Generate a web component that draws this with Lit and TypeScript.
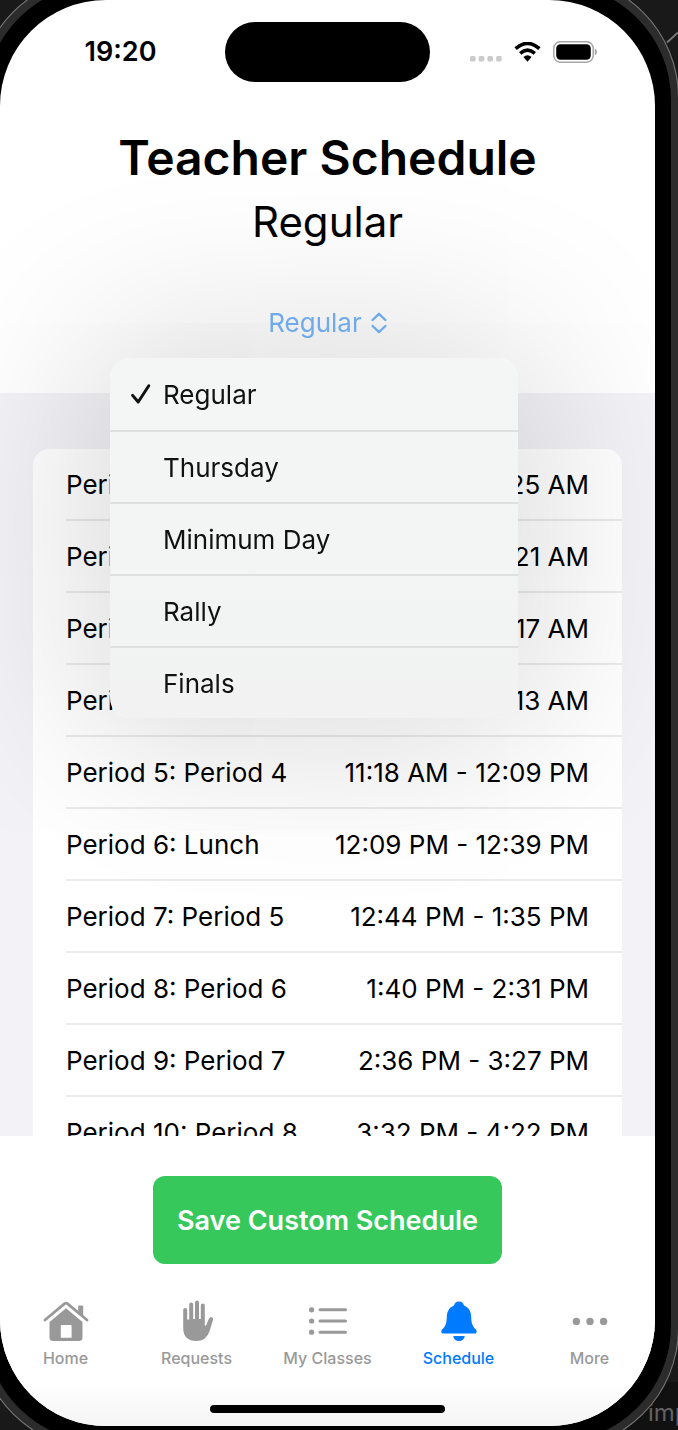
import { LitElement, html, svg, css } from "lit";
import { customElement, state } from "lit/decorators.js";

interface Period {
  name: string;
  time: string;
}

const PERIODS: Period[] = [
  { name: "Period 1: Period 0", time: "7:34 AM - 8:25 AM" },
  { name: "Period 2: Period 1", time: "8:30 AM - 9:21 AM" },
  { name: "Period 3: Period 2", time: "9:26 AM - 10:17 AM" },
  { name: "Period 4: Period 3", time: "10:22 AM - 11:13 AM" },
  { name: "Period 5: Period 4", time: "11:18 AM - 12:09 PM" },
  { name: "Period 6: Lunch", time: "12:09 PM - 12:39 PM" },
  { name: "Period 7: Period 5", time: "12:44 PM - 1:35 PM" },
  { name: "Period 8: Period 6", time: "1:40 PM - 2:31 PM" },
  { name: "Period 9: Period 7", time: "2:36 PM - 3:27 PM" },
  { name: "Period 10: Period 8", time: "3:32 PM - 4:22 PM" },
];

const OPTIONS = ["Regular", "Thursday", "Minimum Day", "Rally", "Finals"];

const TABS = [
  {
    label: "Home",
    icon: svg`
      <path d="M3 20 L22.6 3.6 Q24 2.6 25.4 3.6 L45 20" fill="none" stroke="currentColor" stroke-width="2.8" stroke-linecap="round" stroke-linejoin="round"/>
      <path d="M36.2 6.6 q0-1 1-1 h3 q1 0 1 1 v10 l-5-4.2z"/>
      <path fill-rule="evenodd" d="M24 8.2 L40.5 22 V37.5 Q40.5 41 37 41 H11 Q7.5 41 7.5 37.5 V22 Z M19.8 25 Q18.8 25 18.8 26 V37.8 H29.6 V26 Q29.6 25 28.6 25 Z"/>`,
  },
  {
    label: "Requests",
    icon: svg`
      <path d="M10.2 10 a2 2 0 0 1 4 0 V19.5 h2 V4.5 a2 2 0 0 1 4 0 V19 h1.8 V2.6 a2 2 0 0 1 4 0 V19 h1.8 V5.4 a2 2 0 0 1 4 0 V25.6 q1 .6 1.6-.8 L36 18.6 q1-2 2.8-1.4 q1.8.7 1.2 2.8 L36.6 31 Q33.4 41 23.4 41 Q10.2 41 10.2 27.8 Z"/>`,
  },
  {
    label: "My Classes",
    icon: svg`
      <circle cx="7.6" cy="9.8" r="2.6"/><circle cx="7.6" cy="21" r="2.6"/><circle cx="7.6" cy="32.2" r="2.6"/>
      <path d="M16 9.8 H41.5 M16 21 H41.5 M16 32.2 H41.5" stroke="currentColor" stroke-width="3" stroke-linecap="round"/>`,
  },
  {
    label: "Schedule",
    icon: svg`
      <path d="M24 1.6 C26.6 1.6 28.4 3.2 29 5.6 C34.4 7.8 36 12 36.2 17 C36.4 23.6 37.4 26 40.4 29 C42.4 31 42 33.6 39.4 33.6 H8.6 C6 33.6 5.6 31 7.6 29 C10.6 26 11.6 23.6 11.8 17 C12 12 13.6 7.8 19 5.6 C19.6 3.2 21.4 1.6 24 1.6 Z"/>
      <path d="M18.2 36 H29.8 C29.4 39 27.2 41 24 41 C20.8 41 18.6 39 18.2 36 Z"/>`,
  },
  {
    label: "More",
    icon: svg`
      <circle cx="10.4" cy="21.4" r="3.7"/><circle cx="24" cy="21.4" r="3.7"/><circle cx="37.6" cy="21.4" r="3.7"/>`,
  },
];

@customElement("app-root")
export class AppRoot extends LitElement {
  @state() private selected = "Regular";
  @state() private open = true;
  @state() private tab = "Schedule";

  static styles = css`
    :host {
      display: block;
      font-family: Inter, "Liberation Sans", sans-serif;
      color: #000;
    }
    * {
      box-sizing: border-box;
    }
    button {
      font: inherit;
      color: inherit;
      background: none;
      border: 0;
      margin: 0;
      padding: 0;
      cursor: pointer;
    }
    .desktop {
      position: relative;
      display: flex;
      height: 100vh;
      overflow: hidden;
      background: #191919;
    }
    .edge {
      position: absolute;
      top: 30px;
      right: 0;
      width: 12px;
      height: 14px;
    }
    .backdrop {
      position: absolute;
      right: 0;
      bottom: 0;
      width: 60px;
      height: 48px;
      background: #111;
    }
    .caption {
      position: absolute;
      left: calc(100% - 30px);
      bottom: 3px;
      font-size: 24px;
      line-height: 28px;
      color: #626262;
    }
    .frame {
      position: relative;
      flex: 1;
      display: flex;
      margin: -24px -1px -20px -23px;
      padding: 8px;
      border-radius: 122px;
      background: #2c2c2c;
      box-shadow: inset 0 0 0 1px #777;
    }
    .bezel {
      flex: 1;
      display: flex;
      padding: 16px 16px 16px 15px;
      border-radius: 116px;
      background: #000;
    }
    .screen {
      flex: 1;
      display: flex;
      flex-direction: column;
      overflow: hidden;
      border-radius: 106px;
      background: #fff;
    }
    .status {
      display: grid;
      grid-template-columns: 1fr 205px 1fr;
      align-items: center;
      padding-top: 22px;
    }
    .time {
      padding-left: 16px;
      text-align: center;
      font-size: 27px;
      line-height: 32px;
      font-weight: 600;
    }
    .island {
      height: 60px;
      border-radius: 30px;
      background: #000;
    }
    .signals {
      display: flex;
      align-items: center;
      justify-content: center;
      gap: 12px;
      padding-right: 19px;
    }
    .head {
      position: relative;
      z-index: 1;
      display: flex;
      flex-direction: column;
      align-items: center;
      padding: 44px 0 48px;
    }
    h1 {
      margin: 0;
      font-size: 48px;
      line-height: 64px;
      font-weight: 600;
    }
    h2 {
      margin: 0;
      font-size: 42px;
      line-height: 64px;
      font-weight: 400;
    }
    .picker {
      position: relative;
      z-index: 2;
      display: flex;
      align-items: center;
      gap: 9px;
      margin-top: 47px;
      font-size: 26px;
      line-height: 44px;
      color: #6faaea;
    }
    .menu {
      position: absolute;
      top: 276px;
      left: 110px;
      right: 137px;
      margin: 0;
      padding: 0;
      list-style: none;
      border-radius: 20px;
      background: linear-gradient(#f4f6f6, #f2f2f2);
      box-shadow: 0 0 180px 20px rgba(0, 0, 0, 0.16);
    }
    .menu li + li {
      border-top: 2px solid #dedfdf;
    }
    .option {
      display: flex;
      align-items: center;
      width: 100%;
      height: 70px;
      padding-left: 20px;
      gap: 11px;
      font-size: 26px;
      color: #111;
      text-align: left;
    }
    .menu li:first-child .option {
      height: 72px;
    }
    .mark {
      width: 22px;
      height: 22px;
      visibility: hidden;
    }
    .mark.on {
      visibility: visible;
    }
    .list {
      flex: 1;
      min-height: 0;
      overflow-y: auto;
      scrollbar-width: none;
      padding: 56px 33px;
      background: #f2f2f7;
    }
    .card {
      padding-left: 33px;
      border-radius: 16px;
      background: #fff;
    }
    table {
      width: 100%;
      border-collapse: separate;
      border-spacing: 0;
      font-size: 26px;
      line-height: 32px;
    }
    th,
    td {
      height: 72px;
      padding: 2px 0 0;
      border-bottom: 2px solid #ebebec;
      font-weight: 400;
      text-align: left;
      white-space: nowrap;
    }
    td {
      padding-right: 33px;
      text-align: right;
    }
    .foot {
      display: flex;
      flex-direction: column;
      align-items: center;
      padding: 40px 0 13px;
      background: linear-gradient(#fff 85%, #f5f5f5);
    }
    .save {
      height: 88px;
      padding: 0 24px;
      border-radius: 12px;
      background: #36c85a;
      color: #fff;
      font-size: 27px;
      font-weight: 600;
    }
    .tabs {
      display: grid;
      grid-template-columns: repeat(5, 1fr);
      width: 100%;
      margin: 36px 0;
    }
    .tab {
      display: flex;
      flex-direction: column;
      align-items: center;
      gap: 3px;
      font-size: 16px;
      line-height: 22px;
      font-weight: 500;
      color: #999;
    }
    .tab.on {
      color: #007aff;
    }
    .tab svg {
      width: 48px;
      height: 44px;
      fill: currentColor;
    }
    .bar {
      width: 235px;
      height: 8px;
      border-radius: 4px;
      background: #000;
    }
  `;

  private pick(option: string) {
    this.selected = option;
    this.open = false;
  }

  private renderMenu() {
    return html`<ul class="menu" role="menu">
      ${OPTIONS.map(
        (o) => html`<li role="none">
          <button
            class="option"
            role="menuitemradio"
            aria-checked=${o === this.selected ? "true" : "false"}
            @click=${() => this.pick(o)}
          >
            <svg class="mark ${o === this.selected ? "on" : ""}" viewBox="0 0 22 22" aria-hidden="true">
              <path d="M2.6 12.4 L8.2 19 L18.8 2.8" fill="none" stroke="#111" stroke-width="3" stroke-linecap="round" stroke-linejoin="round" />
            </svg>
            <span>${o}</span>
          </button>
        </li>`
      )}
    </ul>`;
  }

  render() {
    return html`
      <div class="desktop">
        <svg class="edge" viewBox="0 0 12 14" aria-hidden="true">
          <path d="M1 12.5 L12 2.5" stroke="#777" stroke-width="2" />
        </svg>
        <div class="backdrop"></div>
        <span class="caption">imp</span>
        <div class="frame">
          <div class="bezel">
            <main class="screen">
              <div class="status">
                <span class="time">19:20</span>
                <div class="island"></div>
                <div class="signals">
                  <svg width="32" height="20" viewBox="0 0 32 20" fill="#cbcbcb" aria-hidden="true">
                    <rect x="0" y="14" width="5.6" height="5.6" rx="1.6" />
                    <rect x="8.7" y="14" width="5.6" height="5.6" rx="1.6" />
                    <rect x="17.4" y="14" width="5.6" height="5.6" rx="1.6" />
                    <rect x="26.1" y="14" width="5.6" height="5.6" rx="1.6" />
                  </svg>
                  <svg width="27" height="20" viewBox="0 0 27 20" aria-hidden="true">
                    <path d="M1.6 6.6 Q13.5 -3.8 25.4 6.6" fill="none" stroke="#000" stroke-width="3.6" />
                    <path d="M6.2 11.4 Q13.5 5 20.8 11.4" fill="none" stroke="#000" stroke-width="3.6" />
                    <path d="M9.4 15 Q13.5 11.6 17.6 15 L13.5 19.8 Z" />
                  </svg>
                  <svg width="44" height="22" viewBox="0 0 44 22" aria-hidden="true">
                    <rect x="0.8" y="0.8" width="39.4" height="20.4" rx="6.4" fill="none" stroke="#a6a6a6" stroke-width="1.5" />
                    <rect x="3.2" y="3.2" width="34.6" height="15.6" rx="4.2" />
                    <path d="M41.8 7.6 Q44 8.6 44 11 Q44 13.4 41.8 14.4 Z" fill="#a6a6a6" />
                  </svg>
                </div>
              </div>

              <header class="head">
                <h1>Teacher Schedule</h1>
                <h2>${this.selected}</h2>
                <button
                  class="picker"
                  aria-haspopup="menu"
                  aria-expanded=${this.open ? "true" : "false"}
                  @click=${() => (this.open = !this.open)}
                >
                  <span>${this.selected}</span>
                  <svg width="16" height="22" viewBox="0 0 16 22" aria-hidden="true">
                    <path d="M1.6 8 L8 1.8 L14.4 8 M1.6 14 L8 20.2 L14.4 14" fill="none" stroke="currentColor" stroke-width="2.4" stroke-linecap="round" stroke-linejoin="round" />
                  </svg>
                </button>
                ${this.open ? this.renderMenu() : ""}
              </header>

              <section class="list">
                <div class="card">
                  <table>
                    <tbody>
                      ${PERIODS.map((p) => html`<tr><th scope="row">${p.name}</th><td>${p.time}</td></tr>`)}
                    </tbody>
                  </table>
                </div>
              </section>

              <footer class="foot">
                <button class="save">Save Custom Schedule</button>
                <nav class="tabs">
                  ${TABS.map(
                    (t) => html`<button class="tab ${t.label === this.tab ? "on" : ""}" @click=${() => (this.tab = t.label)}>
                      <svg viewBox="0 0 48 44" aria-hidden="true">${t.icon}</svg>
                      <span>${t.label}</span>
                    </button>`
                  )}
                </nav>
                <div class="bar"></div>
              </footer>
            </main>
          </div>
        </div>
      </div>
    `;
  }
}
